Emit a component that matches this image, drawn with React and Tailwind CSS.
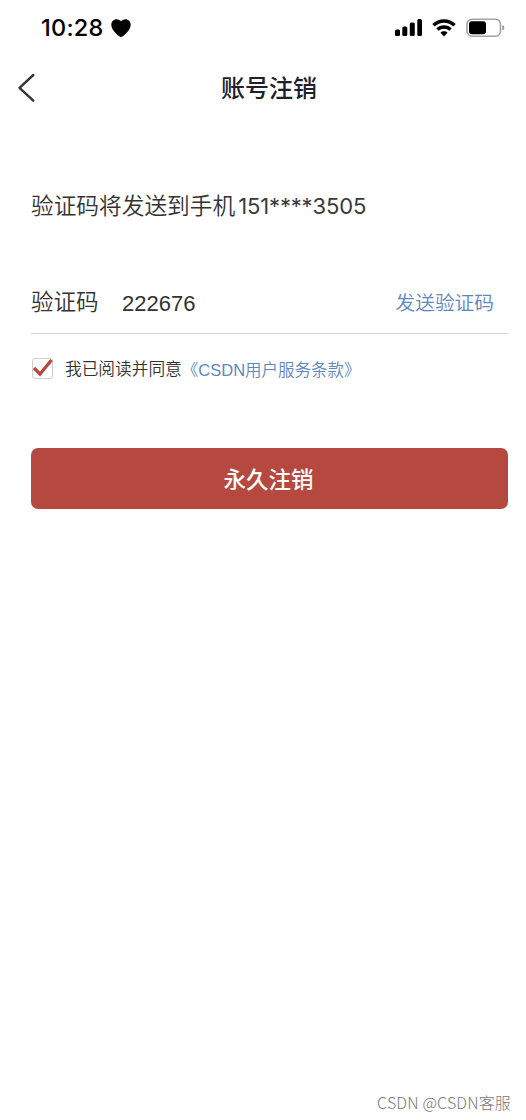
import { useState } from 'react';

function StatusBar() {
  return (
    <div className="flex h-14 items-center pl-[41px] pr-[21px] text-black">
      <span className="font-['Inter','Liberation_Sans',sans-serif] text-[23.500px] leading-none font-medium tracking-[0.25px]">10:28</span>
      <svg className="ml-[7px] h-[18px] w-5" viewBox="0 0 20 18" fill="currentColor">
        <path d="M10 18C8.500 18 .3 11.500.3 6 .3 2.500 2.700.3 5.500.3 7.500.3 9.200 1.200 10 2.600 10.800 1.200 12.500.3 14.500.3c2.800 0 5.200 2.200 5.200 5.700C19.700 11.500 11.500 18 10 18z" />
      </svg>
      <svg className="mr-px mb-px ml-auto h-[17px] w-7" viewBox="0 0 28 17" fill="currentColor">
        <rect x="1" y="10.500" width="5" height="6.500" rx="1.500" />
        <rect x="8.300" y="7.500" width="5" height="9.500" rx="1.500" />
        <rect x="15.800" y="3.500" width="5" height="13.500" rx="1.500" />
        <rect x="23.300" y="0" width="4.700" height="17" rx="1.500" />
      </svg>
      <svg className="mb-px ml-[9px] h-[18px] w-6" viewBox="0 0 24 18" fill="none" stroke="currentColor" strokeWidth="3.400">
        <path d="M1.500 6.300a15 15 0 0 1 21 0" />
        <path d="M5.500 10.600a9.300 9.300 0 0 1 13 0" />
        <path d="M12 12.300c-1.400 0-2.600.5-3.500 1.400L12 17.600l3.500-3.900c-.9-.9-2.100-1.400-3.500-1.400z" fill="currentColor" stroke="none" />
      </svg>
      <svg className="mb-px ml-[10px] h-5 w-[39px]" viewBox="0 0 39 20">
        <rect x="1" y="1.200" width="33.500" height="17" rx="5" fill="none" stroke="#a3a3a3" strokeWidth="1.600" />
        <rect x="3" y="3.300" width="17" height="12.900" rx="3" fill="#000" />
        <path d="M36.300 7v5.500c1.200-.5 2-1.500 2-2.750S37.500 7.500 36.300 7z" fill="#999" />
      </svg>
    </div>
  );
}

export default function App() {
  const [code, setCode] = useState('222676');
  const [agreed, setAgreed] = useState(true);

  return (
    <div className="flex h-[1120px] w-[526px] flex-col overflow-hidden bg-white font-['Liberation_Sans','Noto_Sans_CJK_SC',sans-serif] text-[#333]">
      <StatusBar />

      <header className="grid h-16 grid-cols-[60px_1fr_48px] items-center">
        <button aria-label="返回" className="pl-[17px]">
          <svg className="h-[30px] w-5" viewBox="0 0 20 30" fill="none" stroke="#333338" strokeWidth="2.400" strokeLinecap="round" strokeLinejoin="round">
            <path d="M16.300 2L2.500 14.800l13.800 12.800" />
          </svg>
        </button>
        <h1 className="pb-0.5 text-center font-['Noto_Sans_CJK_SC',sans-serif] text-[24px] leading-none font-medium text-[#20202a]">账号注销</h1>
      </header>

      <main className="flex flex-col pr-[18px] pl-[31px] pt-[60px]">
        <p className="flex h-[52px] items-center whitespace-nowrap leading-none">
          <span className="pb-0.5 font-['Noto_Sans_CJK_SC',sans-serif] text-[22.700px] font-[350]">验证码将发送到手机</span>
          <span className="ml-[3px] font-['Inter','Liberation_Sans',sans-serif] text-[22px] tracking-[-0.15px] text-[#3a3a3a]">151****3505</span>
        </p>

        <div className="mt-[38px] flex h-16 items-center border-b border-[#d0d3dc] leading-none">
          <label htmlFor="code" className="w-[91px] pb-0.5 font-['Noto_Sans_CJK_SC',sans-serif] text-[22.500px] font-[350]">验证码</label>
          <input
            id="code"
            value={code}
            onChange={e => setCode(e.target.value)}
            className="mt-1 w-40 font-['Liberation_Sans',sans-serif] text-[22px] outline-none"
          />
          <button className="mr-[14px] ml-auto font-['Noto_Sans_CJK_SC',sans-serif] text-[19.700px] font-[350] text-[#5c87c0]">发送验证码</button>
        </div>

        <div className="mt-[17px] flex h-9 items-center whitespace-nowrap leading-none">
          <button
            aria-label="同意服务条款"
            onClick={() => setAgreed(!agreed)}
            className="mb-0.5 ml-px flex size-[21px] items-center justify-center rounded-[3px] border border-[#cfcfcf]"
          >
            {agreed && (
              <svg className="size-[21px] shrink-0" viewBox="0 0 21 21" fill="none" stroke="#b8483f" strokeWidth="3.200">
                <path d="M2 10l6 6L19.500 2" />
              </svg>
            )}
          </button>
          <span className="ml-3 pb-px font-['Noto_Sans_CJK_SC',sans-serif] text-[16.700px] font-[350]">我已阅读并同意</span>
          <a href="#" className="pt-[3px] text-[16.500px] font-[350] text-[#5c87c0]">《CSDN用户服务条款》</a>
        </div>

        <button className="mt-[61px] h-[61px] rounded-[7px] bg-[#b5493f] pr-0.5 font-['Noto_Sans_CJK_SC',sans-serif] text-[22.500px] leading-none font-medium text-white">
          永久注销
        </button>
      </main>

      <footer className="mt-auto flex h-9 items-center justify-end pr-[15px] font-['Noto_Sans_CJK_SC',sans-serif] text-[16px] leading-none font-light tracking-[0.15px] text-[#777]">
        CSDN @CSDN客服
      </footer>
    </div>
  );
}
